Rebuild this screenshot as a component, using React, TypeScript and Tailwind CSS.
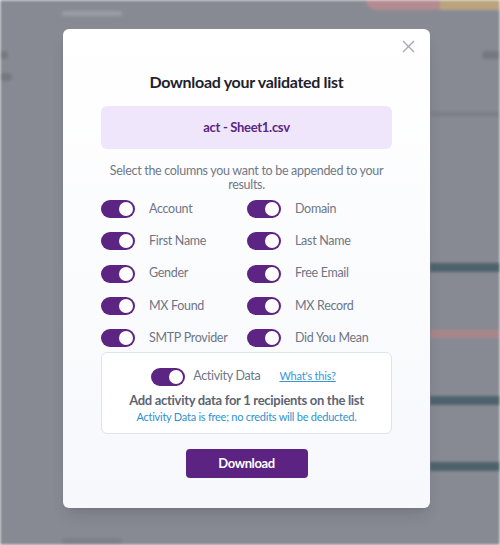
import React, { useState } from 'react';

type Column = { key: string; label: string };

const columns: Column[] = [
  { key: 'account', label: 'Account' },
  { key: 'domain', label: 'Domain' },
  { key: 'first_name', label: 'First Name' },
  { key: 'last_name', label: 'Last Name' },
  { key: 'gender', label: 'Gender' },
  { key: 'free_email', label: 'Free Email' },
  { key: 'mx_found', label: 'MX Found' },
  { key: 'mx_record', label: 'MX Record' },
  { key: 'smtp_provider', label: 'SMTP Provider' },
  { key: 'did_you_mean', label: 'Did You Mean' },
];

/**
 * Toggle
 * @description Pill switch, purple track with white knob on the right when on.
 */
const Toggle: React.FC<{ on: boolean; onChange: () => void }> = ({ on, onChange }) => (
  <button
    type="button"
    onClick={onChange}
    className={`flex h-[18px] w-[34px] shrink-0 items-center rounded-full px-[2px] ${
      on ? 'justify-end bg-[#5c2483]' : 'justify-start bg-[#d5d9e0]'
    }`}
  >
    <span className="h-[14px] w-[14px] rounded-full bg-white" />
  </button>
);

// blurred page behind the overlay
const Backdrop: React.FC = () => (
  <div className="flex h-full flex-col bg-[#878a93] blur-[1.5px]">
    <div className="flex h-[10px] justify-end">
      <div className="h-full w-[74px] rounded-bl-full bg-[#b48b91]" />
      <div className="h-full w-[60px] bg-[#b9a47e]" />
    </div>
    <div className="ml-[62px] mt-[1px] h-[5px] w-[60px] rounded bg-[#9a9da5]" />
    <div className="mt-[35px] flex justify-between">
      <div className="h-[8px] w-[8px] rounded bg-[#75787f]" />
      <div className="h-[8px] w-[18px] rounded bg-[#75787f]" />
    </div>
    <div className="mt-[14px] h-[8px] w-[12px] rounded bg-[#75787f]" />
    <div className="ml-auto mt-[30px] h-[6px] w-[70px] rounded bg-[#7d8088]" />
    <div className="ml-auto mt-[146px] h-[9px] w-[70px] bg-[#4e626b]" />
    <div className="ml-auto mt-[58px] h-[8px] w-[70px] bg-[#a8868b]" />
    <div className="ml-auto mt-[58px] h-[9px] w-[70px] bg-[#4e626b]" />
    <div className="ml-auto mt-[57px] h-[9px] w-[70px] bg-[#4e626b]" />
    <div className="ml-[62px] mt-[67px] h-[6px] w-[60px] rounded bg-[#7d8088]" />
  </div>
);

export default function App() {
  const [selected, setSelected] = useState<Record<string, boolean>>(
    Object.fromEntries(columns.map((c) => [c.key, true]))
  );
  const [activity, setActivity] = useState(true);

  const flip = (key: string) => setSelected((s) => ({ ...s, [key]: !s[key] }));

  return (
    <div
      className="relative h-[545px] w-full overflow-hidden"
      style={{ fontFamily: 'Lato, "Noto Sans", sans-serif' }}
    >
      <Backdrop />

      {/* modal */}
      <div className="absolute left-[63px] top-[29px] w-[367px] rounded-[6px] bg-gradient-to-b from-white to-[#f7f8fc] px-[38px] pb-[30px] pt-[41px] shadow-lg">
        <button type="button" className="absolute right-[14px] top-[10px] p-[1px]">
          <svg width="13" height="13" viewBox="0 0 13 13" fill="none" stroke="#a3abb7" strokeWidth="1.4">
            <path d="M1 1l11 11M12 1L1 12" />
          </svg>
        </button>

        <h2 className="text-center text-[16px] font-bold leading-[24px] tracking-[-0.3px] text-[#1d222d]">
          Download your validated list
        </h2>

        <div className="mt-[12px] flex h-[43px] items-center justify-center rounded-[6px] bg-[#f0e6fb]">
          <span className="text-[13px] font-bold tracking-[-0.3px] text-[#5a2784]">act - Sheet1.csv</span>
        </div>

        <p className="mx-auto mt-[15px] w-[286px] text-center text-[12.5px] leading-[14px] tracking-[-0.3px] text-[#707887]">
          Select the columns you want to be appended to your results.
        </p>

        <div className="mt-[8px] grid grid-cols-[146px_146px] gap-y-[14.3px]">
          {columns.map((c) => (
            <label key={c.key} className="flex h-[18px] items-center gap-[14px]">
              <Toggle on={selected[c.key]} onChange={() => flip(c.key)} />
              <span className="whitespace-nowrap text-[12.5px] tracking-[-0.3px] text-[#6e7686]">{c.label}</span>
            </label>
          ))}
        </div>

        <div className="mt-[5px] rounded-[6px] border border-[#dfe3ea] bg-white pb-[9px] pt-[14px] text-center">
          <div className="flex items-center justify-center pr-[6px]">
            <Toggle on={activity} onChange={() => setActivity(!activity)} />
            <span className="ml-[8px] text-[12.5px] tracking-[-0.3px] text-[#6e7686]">Activity Data</span>
            <a href="#" className="ml-[19px] text-[11px] tracking-[-0.2px] text-[#3597d8] underline">
              What's this?
            </a>
          </div>
          <p className="mt-[6px] text-[13px] font-bold leading-[17px] tracking-[-0.3px] text-[#5d6472]">
            Add activity data for 1 recipients on the list
          </p>
          <p className="text-[11px] leading-[15px] tracking-[-0.25px] text-[#2e91d2]">
            Activity Data is free; no credits will be deducted.
          </p>
        </div>

        <div className="mt-[15px] flex justify-center">
          <button
            type="button"
            className="h-[29px] w-[122px] rounded-[4px] bg-[#5c2383] text-[13px] font-bold tracking-[-0.4px] text-white"
          >
            Download
          </button>
        </div>
      </div>
    </div>
  );
}
